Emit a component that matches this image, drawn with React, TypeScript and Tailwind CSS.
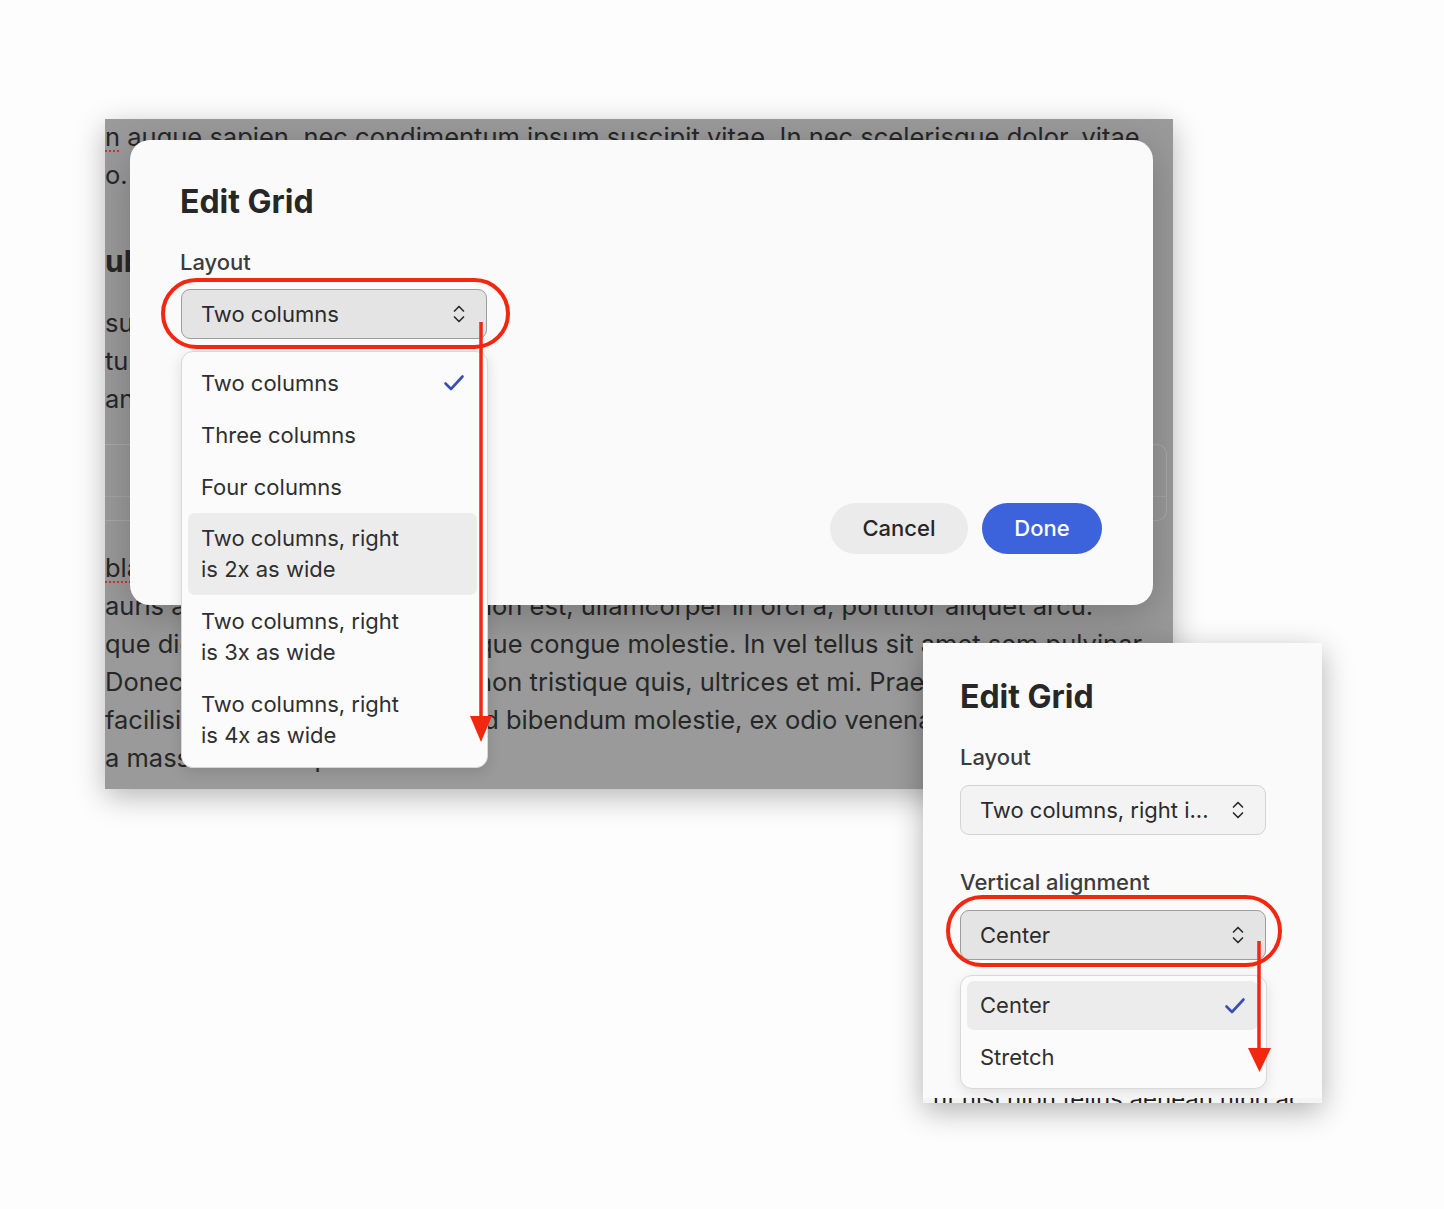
import React from "react";

const RED = "#f2270f";

function UpDown() {
  return (
    <svg width="14" height="22" viewBox="0 0 14 22" fill="none" stroke="#2d2d2d" strokeWidth="1.7" strokeLinecap="round" strokeLinejoin="round">
      <path d="M2.5 8 L7 3.5 L11.5 8" />
      <path d="M2.5 14 L7 18.5 L11.5 14" />
    </svg>
  );
}

function Check() {
  return (
    <svg width="22" height="18" viewBox="0 0 22 18" fill="none" stroke="#3a4db3" strokeWidth="2.6" strokeLinecap="round" strokeLinejoin="round">
      <path d="M2.5 9.5 L8 15 L19.5 2.5" />
    </svg>
  );
}

function Select({ value, active }: { value: string; active?: boolean }) {
  return (
    <div
      className={`flex h-[50px] w-[306px] items-center justify-between rounded-[9px] border pl-[19px] pr-[20px] ${
        active ? "border-[#9d9d9d] bg-[#e4e4e4]" : "border-[#d3d3d3] bg-[#f3f3f3]"
      }`}
    >
      <span className="text-[22px] text-[#2b2b2b]">{value}</span>
      <UpDown />
    </div>
  );
}

function Option({
  lines,
  checked,
  active,
  h = "h-[52px]",
}: {
  lines: string[];
  checked?: boolean;
  active?: boolean;
  h?: string;
}) {
  return (
    <div
      className={`flex items-center justify-between rounded-[7px] pl-[13px] pr-[12px] ${h} ${
        active ? "bg-[#ececec]" : ""
      }`}
    >
      <div className="text-[22px] leading-[31px] text-[#2f2f2f]">
        {lines.map((l) => (
          <div key={l}>{l}</div>
        ))}
      </div>
      {checked && <Check />}
    </div>
  );
}

function Label({ children }: { children: React.ReactNode }) {
  return <div className="text-[22px] font-medium leading-[28px] text-[#3c3c3c]">{children}</div>;
}

function Title() {
  return <div className="text-[32px] font-bold leading-[40px] text-[#272727]">Edit Grid</div>;
}

// background page lines that are split by the open dropdown
const splitRows = [
  { left: "auris at nisl", right: "non est, ullamcorper in orci a, porttitor aliquet arcu." },
  { left: "que dignissim", right: "que congue molestie. In vel tellus sit amet sem pulvinar" },
  { left: "Donec lorem", right: "non tristique quis, ultrices et mi. Praesent luctus" },
  { left: "facilisis eget", right: "id bibendum molestie, ex odio venenatis nisl" },
];

export default function App() {
  return (
    <div className="relative h-[1209px] w-[1444px] overflow-hidden bg-[#fdfdfd] font-['Inter',sans-serif]">
      {/* first screenshot: dimmed page with the dialog */}
      <div className="absolute left-[105px] top-[119px] h-[670px] w-[1068px] overflow-hidden bg-[#9a9a9a] shadow-[0_8px_28px_rgba(0,0,0,0.28)]">
        <div className="-mt-[1px] whitespace-nowrap text-[25.5px] leading-[38px] text-[#272727]">
          <p>
            <span className="underline decoration-[#c0392b] decoration-dotted decoration-2 underline-offset-4">n</span> augue
            sapien, nec condimentum ipsum suscipit vitae. In nec scelerisque dolor, vitae
          </p>
          <p>o. Nulla facilisi.</p>
          <p className="mt-[47px] text-[30px] font-bold leading-[40px]">ubheading</p>
          <div className="mt-[23px]">
            <p>surem ipsum dolor</p>
            <p>tur adipiscing</p>
            <p>ante ipsum primis</p>
          </div>
          <div className="mt-[26px] h-[77px] w-[1062px] rounded-r-[10px] border border-l-0 border-[#a9a9a9]">
            <div className="mt-[51px] border-t border-[#a4a4a4]" />
          </div>
          <p className="mt-[28px]">
            <span className="underline decoration-[#c0392b] decoration-dotted decoration-2 underline-offset-4">blandit</span>
          </p>
          {splitRows.map((r) => (
            <div key={r.right} className="flex">
              <span className="w-[372px] shrink-0 overflow-hidden">{r.left}</span>
              <span>{r.right}</span>
            </div>
          ))}
          <p>a massa nunc ac purus.</p>
        </div>

        <div className="absolute left-[25px] top-[21px] flex h-[465px] w-[1023px] flex-col rounded-[20px] bg-[#fafafa] pl-[50px] pt-[42px] shadow-[0_10px_40px_rgba(0,0,0,0.22)]">
          <Title />
          <div className="mt-[26px]">
            <Label>Layout</Label>
          </div>
          <div className="ml-px mt-[13px]">
            <Select value="Two columns" active />
          </div>
          <div className="mt-auto flex justify-end gap-[14px] pb-[51px] pr-[51px]">
            <button className="h-[51px] w-[138px] rounded-full bg-[#ebebeb] text-[22px] font-medium text-[#262626]">
              Cancel
            </button>
            <button className="h-[51px] w-[120px] rounded-full bg-[#3d63dc] text-[22px] font-medium text-white">
              Done
            </button>
          </div>
        </div>
      </div>

      {/* open layout menu */}
      <div className="absolute left-[181px] top-[351px] h-[417px] w-[307px] rounded-[12px] border border-[#d8d8d8] bg-[#fbfbfb] py-[5px] pl-[6px] pr-[10px] shadow-[0_4px_14px_rgba(0,0,0,0.12)]">
        <Option lines={["Two columns"]} checked />
        <Option lines={["Three columns"]} />
        <Option lines={["Four columns"]} />
        <Option lines={["Two columns, right", "is 2x as wide"]} active h="h-[82px]" />
        <Option lines={["Two columns, right", "is 3x as wide"]} h="h-[83px]" />
        <Option lines={["Two columns, right", "is 4x as wide"]} h="h-[83px]" />
      </div>

      {/* second screenshot: narrow dialog */}
      <div className="absolute left-[923px] top-[643px] flex h-[460px] w-[399px] flex-col bg-[#fafafa] shadow-[0_8px_28px_rgba(0,0,0,0.3)]">
        <div className="flex-1 pl-[37px] pt-[34px]">
          <Title />
          <div className="mt-[26px]">
            <Label>Layout</Label>
          </div>
          <div className="mt-[14px]">
            <Select value="Two columns, right i..." />
          </div>
          <div className="mt-[33px]">
            <Label>Vertical alignment</Label>
          </div>
          <div className="mt-[14px]">
            <Select value="Center" active />
          </div>
          <div className="mt-[15px] h-[114px] w-[307px] rounded-[12px] border border-[#d8d8d8] bg-[#fbfbfb] py-[5px] pl-[6px] pr-[8px] shadow-[0_4px_14px_rgba(0,0,0,0.1)]">
            <Option lines={["Center"]} checked active h="h-[49px]" />
            <Option lines={["Stretch"]} h="h-[55px]" />
          </div>
        </div>
        <div className="h-[5px] overflow-hidden bg-[#f4f4f4] pl-[10px]">
          <div className="mt-[-11px] whitespace-nowrap text-[24px] leading-[24px] text-[#1e1e1e]">
            ut nisi nibh tellus aenean nibh ac
          </div>
        </div>
      </div>

      {/* red annotations */}
      <svg className="pointer-events-none absolute left-0 top-0" width="1444" height="1209" viewBox="0 0 1444 1209" fill="none">
        <rect x="163" y="280" width="345" height="67" rx="33.5" stroke={RED} strokeWidth="4" />
        <line x1="481" y1="322" x2="481" y2="720" stroke={RED} strokeWidth="3.5" />
        <path d="M470 716 L492 716 L481 742 Z" fill={RED} />
        <rect x="948" y="897" width="332" height="68" rx="34" stroke={RED} strokeWidth="4" />
        <line x1="1259" y1="941" x2="1259" y2="1050" stroke={RED} strokeWidth="3.5" />
        <path d="M1248 1048 L1271 1048 L1259.5 1072 Z" fill={RED} />
      </svg>
    </div>
  );
}
